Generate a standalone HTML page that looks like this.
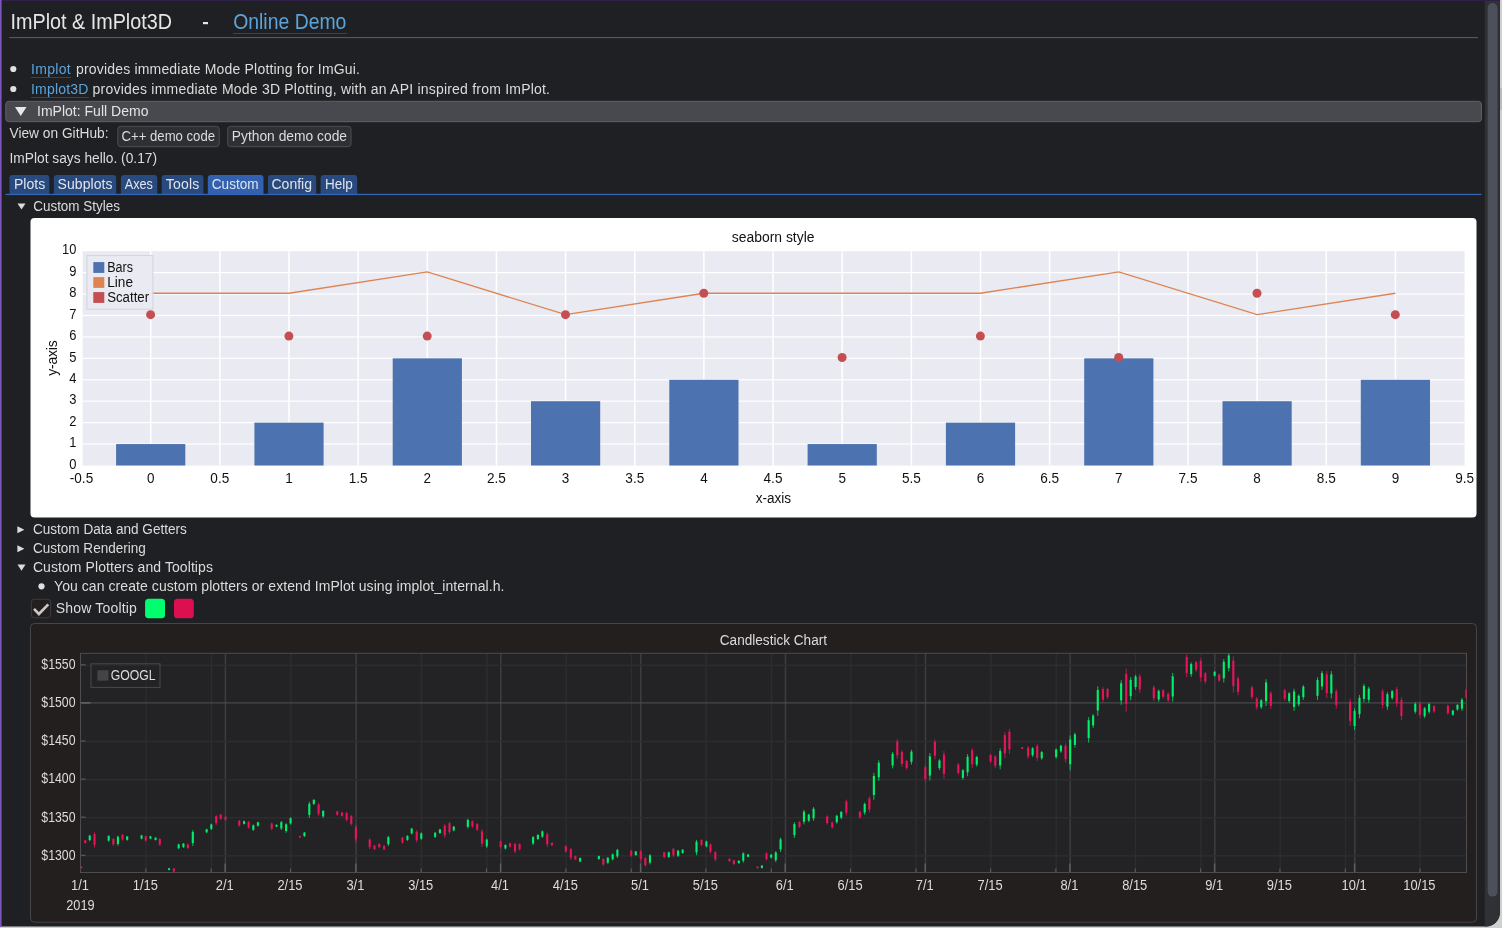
<!DOCTYPE html>
<html><head><meta charset="utf-8"><style>
html,body{margin:0;padding:0;background:#1f2023;overflow:hidden;}
svg{display:block;will-change:transform;}
text{font-family:"Liberation Sans", sans-serif;white-space:pre;}
</style></head><body>
<svg width="1502" height="928" viewBox="0 0 1502 928">
<rect x="0" y="0" width="1502" height="928" fill="#d0d0d1"/>
<path d="M0 0 H1500 V912.5 A14 14 0 0 1 1486 926.5 H0 Z" fill="#1f2023"/>
<rect x="0" y="0" width="1500" height="1" fill="#2f2048"/>
<rect x="0" y="0" width="1.6" height="927" fill="#7c55bd"/>
<rect x="1500" y="88" width="2" height="22" fill="#b9bbbf"/>
<text x="10.6" y="28.7" font-size="21.5" fill="#e6e6e6" textLength="161.4" lengthAdjust="spacingAndGlyphs">ImPlot &amp; ImPlot3D</text>
<rect x="203" y="22" width="5" height="2.2" fill="#e6e6e6"/>
<text x="233.2" y="28.7" font-size="21.5" fill="#5ba3d9" textLength="113.2" lengthAdjust="spacingAndGlyphs">Online Demo</text>
<rect x="233" y="33" width="114" height="1" fill="#3b4250"/>
<rect x="9.3" y="37.1" width="1468.6" height="1" fill="#606060"/>
<circle cx="13.3" cy="69" r="3.1" fill="#e0e0e0"/>
<circle cx="13.3" cy="89" r="3.1" fill="#e0e0e0"/>
<text x="31.0" y="73.6" font-size="14" fill="#5ba3d9" textLength="39.6" lengthAdjust="spacing">Implot</text>
<rect x="31" y="77" width="40" height="1" fill="#3b4250"/>
<text x="75.9" y="73.6" font-size="14" fill="#dcdcdc" textLength="284.1" lengthAdjust="spacing">provides immediate Mode Plotting for ImGui.</text>
<text x="31.0" y="93.6" font-size="14" fill="#5ba3d9" textLength="57.4" lengthAdjust="spacing">Implot3D</text>
<rect x="31" y="97" width="58" height="1" fill="#3b4250"/>
<text x="92.6" y="93.6" font-size="14" fill="#dcdcdc" textLength="457.4" lengthAdjust="spacing">provides immediate Mode 3D Plotting, with an API inspired from ImPlot.</text>
<rect x="5.8" y="101.3" width="1475.6" height="20.4" rx="3" fill="#48494e" stroke="#606165" stroke-width="1"/>
<path d="M15 107 L26.5 107 L20.75 116 Z" fill="#e8e8e8"/>
<text x="37.0" y="116.2" font-size="14" fill="#e4e4e4" textLength="111.5" lengthAdjust="spacing">ImPlot: Full Demo</text>
<text x="9.5" y="138.2" font-size="14" fill="#dcdcdc" textLength="99.0" lengthAdjust="spacingAndGlyphs">View on GitHub:</text>
<rect x="117.8" y="126.3" width="101.4" height="20.4" rx="3" fill="#2f3034" stroke="#4d4e53" stroke-width="1"/>
<text x="121.6" y="140.5" font-size="14" fill="#dcdcdc" textLength="93.4" lengthAdjust="spacingAndGlyphs">C++ demo code</text>
<rect x="227.7" y="126.3" width="123.3" height="20.4" rx="3" fill="#2f3034" stroke="#4d4e53" stroke-width="1"/>
<text x="231.8" y="140.5" font-size="14" fill="#dcdcdc" textLength="115.2" lengthAdjust="spacingAndGlyphs">Python demo code</text>
<text x="9.5" y="163.2" font-size="14" fill="#dcdcdc" textLength="147.5" lengthAdjust="spacingAndGlyphs">ImPlot says hello. (0.17)</text>
<path d="M9.5 194 L9.5 178 Q9.5 175 12.5 175 L46.3 175 Q49.3 175 49.3 178 L49.3 194 Z" fill="#294a7e"/>
<path d="M53.8 194 L53.8 178 Q53.8 175 56.8 175 L113.2 175 Q116.2 175 116.2 178 L116.2 194 Z" fill="#294a7e"/>
<path d="M120.9 194 L120.9 178 Q120.9 175 123.9 175 L154.3 175 Q157.3 175 157.3 178 L157.3 194 Z" fill="#294a7e"/>
<path d="M161.7 194 L161.7 178 Q161.7 175 164.7 175 L200.4 175 Q203.4 175 203.4 178 L203.4 194 Z" fill="#294a7e"/>
<path d="M207.8 194 L207.8 178 Q207.8 175 210.8 175 L260.5 175 Q263.5 175 263.5 178 L263.5 194 Z" fill="#3261b0"/>
<path d="M267.9 194 L267.9 178 Q267.9 175 270.9 175 L313.2 175 Q316.2 175 316.2 178 L316.2 194 Z" fill="#294a7e"/>
<path d="M320.6 194 L320.6 178 Q320.6 175 323.6 175 L354.2 175 Q357.2 175 357.2 178 L357.2 194 Z" fill="#294a7e"/>
<rect x="5.5" y="193.8" width="1476" height="1.3" fill="#3565b5"/>
<text x="13.9" y="188.8" font-size="14" fill="#e0e4ec" textLength="31.4" lengthAdjust="spacing">Plots</text>
<text x="57.6" y="188.8" font-size="14" fill="#e0e4ec" textLength="54.8" lengthAdjust="spacing">Subplots</text>
<text x="124.7" y="188.8" font-size="14" fill="#e0e4ec" textLength="28.2" lengthAdjust="spacingAndGlyphs">Axes</text>
<text x="165.8" y="188.8" font-size="14" fill="#e0e4ec" textLength="33.5" lengthAdjust="spacing">Tools</text>
<text x="211.8" y="188.8" font-size="14" fill="#e0e4ec" textLength="46.8" lengthAdjust="spacingAndGlyphs">Custom</text>
<text x="271.5" y="188.8" font-size="14" fill="#e0e4ec" textLength="40.5" lengthAdjust="spacing">Config</text>
<text x="325.0" y="188.8" font-size="14" fill="#e0e4ec" textLength="27.8" lengthAdjust="spacingAndGlyphs">Help</text>
<path d="M17.5 203.4 L25.5 203.4 L21.5 209.6 Z" fill="#dcdcdc"/>
<text x="33.2" y="210.6" font-size="14" fill="#dcdcdc" textLength="86.8" lengthAdjust="spacingAndGlyphs">Custom Styles</text>
<rect x="30.5" y="218" width="1446" height="299.5" rx="4" fill="#ffffff"/>
<rect x="82.6" y="251.2" width="1382.0" height="214.3" fill="#eaeaf2"/>
<rect x="149.95" y="251.2" width="1.5" height="214.3" fill="#ffffff"/>
<rect x="219.10" y="251.2" width="1.5" height="214.3" fill="#ffffff"/>
<rect x="288.25" y="251.2" width="1.5" height="214.3" fill="#ffffff"/>
<rect x="357.40" y="251.2" width="1.5" height="214.3" fill="#ffffff"/>
<rect x="426.55" y="251.2" width="1.5" height="214.3" fill="#ffffff"/>
<rect x="495.70" y="251.2" width="1.5" height="214.3" fill="#ffffff"/>
<rect x="564.85" y="251.2" width="1.5" height="214.3" fill="#ffffff"/>
<rect x="634.00" y="251.2" width="1.5" height="214.3" fill="#ffffff"/>
<rect x="703.15" y="251.2" width="1.5" height="214.3" fill="#ffffff"/>
<rect x="772.30" y="251.2" width="1.5" height="214.3" fill="#ffffff"/>
<rect x="841.45" y="251.2" width="1.5" height="214.3" fill="#ffffff"/>
<rect x="910.60" y="251.2" width="1.5" height="214.3" fill="#ffffff"/>
<rect x="979.75" y="251.2" width="1.5" height="214.3" fill="#ffffff"/>
<rect x="1048.90" y="251.2" width="1.5" height="214.3" fill="#ffffff"/>
<rect x="1118.05" y="251.2" width="1.5" height="214.3" fill="#ffffff"/>
<rect x="1187.20" y="251.2" width="1.5" height="214.3" fill="#ffffff"/>
<rect x="1256.35" y="251.2" width="1.5" height="214.3" fill="#ffffff"/>
<rect x="1325.50" y="251.2" width="1.5" height="214.3" fill="#ffffff"/>
<rect x="1394.65" y="251.2" width="1.5" height="214.3" fill="#ffffff"/>
<rect x="82.6" y="443.47" width="1382.0" height="1.2" fill="#ffffff"/>
<rect x="82.6" y="422.04" width="1382.0" height="1.2" fill="#ffffff"/>
<rect x="82.6" y="400.61" width="1382.0" height="1.2" fill="#ffffff"/>
<rect x="82.6" y="379.18" width="1382.0" height="1.2" fill="#ffffff"/>
<rect x="82.6" y="357.75" width="1382.0" height="1.2" fill="#ffffff"/>
<rect x="82.6" y="336.32" width="1382.0" height="1.2" fill="#ffffff"/>
<rect x="82.6" y="314.89" width="1382.0" height="1.2" fill="#ffffff"/>
<rect x="82.6" y="293.46" width="1382.0" height="1.2" fill="#ffffff"/>
<rect x="82.6" y="272.03" width="1382.0" height="1.2" fill="#ffffff"/>
<rect x="116.10" y="444.07" width="69.2" height="21.43" fill="#4c72b0"/>
<rect x="254.40" y="422.64" width="69.2" height="42.86" fill="#4c72b0"/>
<rect x="392.70" y="358.35" width="69.2" height="107.15" fill="#4c72b0"/>
<rect x="531.00" y="401.21" width="69.2" height="64.29" fill="#4c72b0"/>
<rect x="669.30" y="379.78" width="69.2" height="85.72" fill="#4c72b0"/>
<rect x="807.60" y="444.07" width="69.2" height="21.43" fill="#4c72b0"/>
<rect x="945.90" y="422.64" width="69.2" height="42.86" fill="#4c72b0"/>
<rect x="1084.20" y="358.35" width="69.2" height="107.15" fill="#4c72b0"/>
<rect x="1222.50" y="401.21" width="69.2" height="64.29" fill="#4c72b0"/>
<rect x="1360.80" y="379.78" width="69.2" height="85.72" fill="#4c72b0"/>
<polyline points="150.70,293.26 289.00,293.26 427.30,271.83 565.60,314.69 703.90,293.26 842.20,293.26 980.50,293.26 1118.80,271.83 1257.10,314.69 1395.40,293.26" fill="none" stroke="#dd8452" stroke-width="1.3"/>
<circle cx="150.60" cy="314.69" r="4.5" fill="#c44e52"/>
<circle cx="288.90" cy="336.12" r="4.5" fill="#c44e52"/>
<circle cx="427.20" cy="336.12" r="4.5" fill="#c44e52"/>
<circle cx="565.50" cy="314.69" r="4.5" fill="#c44e52"/>
<circle cx="703.80" cy="293.26" r="4.5" fill="#c44e52"/>
<circle cx="842.10" cy="357.55" r="4.5" fill="#c44e52"/>
<circle cx="980.40" cy="336.12" r="4.5" fill="#c44e52"/>
<circle cx="1118.70" cy="357.55" r="4.5" fill="#c44e52"/>
<circle cx="1257.00" cy="293.26" r="4.5" fill="#c44e52"/>
<circle cx="1395.30" cy="314.69" r="4.5" fill="#c44e52"/>
<rect x="86.9" y="255.6" width="66" height="53.6" fill="#eaeaf2" stroke="#d0d3de" stroke-width="1"/>
<rect x="93.3" y="262.1" width="11" height="10.8" fill="#4c72b0"/>
<text x="107.2" y="271.9" font-size="14" fill="#111111" textLength="25.8" lengthAdjust="spacingAndGlyphs">Bars</text>
<rect x="93.3" y="277.1" width="11" height="10.8" fill="#dd8452"/>
<text x="107.2" y="286.9" font-size="14" fill="#111111" textLength="25.8" lengthAdjust="spacingAndGlyphs">Line</text>
<rect x="93.3" y="292.1" width="11" height="10.8" fill="#c44e52"/>
<text x="107.2" y="301.9" font-size="14" fill="#111111" textLength="41.9" lengthAdjust="spacingAndGlyphs">Scatter</text>
<text x="76.4" y="468.7" font-size="14" fill="#111111" textLength="7.2" lengthAdjust="spacingAndGlyphs" text-anchor="end">0</text>
<text x="76.4" y="447.3" font-size="14" fill="#111111" textLength="7.2" lengthAdjust="spacingAndGlyphs" text-anchor="end">1</text>
<text x="76.4" y="425.8" font-size="14" fill="#111111" textLength="7.2" lengthAdjust="spacingAndGlyphs" text-anchor="end">2</text>
<text x="76.4" y="404.4" font-size="14" fill="#111111" textLength="7.2" lengthAdjust="spacingAndGlyphs" text-anchor="end">3</text>
<text x="76.4" y="383.0" font-size="14" fill="#111111" textLength="7.2" lengthAdjust="spacingAndGlyphs" text-anchor="end">4</text>
<text x="76.4" y="361.6" font-size="14" fill="#111111" textLength="7.2" lengthAdjust="spacingAndGlyphs" text-anchor="end">5</text>
<text x="76.4" y="340.1" font-size="14" fill="#111111" textLength="7.2" lengthAdjust="spacingAndGlyphs" text-anchor="end">6</text>
<text x="76.4" y="318.7" font-size="14" fill="#111111" textLength="7.2" lengthAdjust="spacingAndGlyphs" text-anchor="end">7</text>
<text x="76.4" y="297.3" font-size="14" fill="#111111" textLength="7.2" lengthAdjust="spacingAndGlyphs" text-anchor="end">8</text>
<text x="76.4" y="275.8" font-size="14" fill="#111111" textLength="7.2" lengthAdjust="spacingAndGlyphs" text-anchor="end">9</text>
<text x="76.4" y="254.4" font-size="14" fill="#111111" textLength="14.3" lengthAdjust="spacingAndGlyphs" text-anchor="end">10</text>
<text x="81.5" y="483.0" font-size="14" fill="#111111" textLength="23.4" lengthAdjust="spacingAndGlyphs" text-anchor="middle">-0.5</text>
<text x="150.7" y="483.0" font-size="14" fill="#111111" textLength="7.5" lengthAdjust="spacingAndGlyphs" text-anchor="middle">0</text>
<text x="219.8" y="483.0" font-size="14" fill="#111111" textLength="18.9" lengthAdjust="spacingAndGlyphs" text-anchor="middle">0.5</text>
<text x="289.0" y="483.0" font-size="14" fill="#111111" textLength="7.5" lengthAdjust="spacingAndGlyphs" text-anchor="middle">1</text>
<text x="358.1" y="483.0" font-size="14" fill="#111111" textLength="18.9" lengthAdjust="spacingAndGlyphs" text-anchor="middle">1.5</text>
<text x="427.3" y="483.0" font-size="14" fill="#111111" textLength="7.5" lengthAdjust="spacingAndGlyphs" text-anchor="middle">2</text>
<text x="496.4" y="483.0" font-size="14" fill="#111111" textLength="18.9" lengthAdjust="spacingAndGlyphs" text-anchor="middle">2.5</text>
<text x="565.6" y="483.0" font-size="14" fill="#111111" textLength="7.5" lengthAdjust="spacingAndGlyphs" text-anchor="middle">3</text>
<text x="634.8" y="483.0" font-size="14" fill="#111111" textLength="18.9" lengthAdjust="spacingAndGlyphs" text-anchor="middle">3.5</text>
<text x="703.9" y="483.0" font-size="14" fill="#111111" textLength="7.5" lengthAdjust="spacingAndGlyphs" text-anchor="middle">4</text>
<text x="773.0" y="483.0" font-size="14" fill="#111111" textLength="18.9" lengthAdjust="spacingAndGlyphs" text-anchor="middle">4.5</text>
<text x="842.2" y="483.0" font-size="14" fill="#111111" textLength="7.5" lengthAdjust="spacingAndGlyphs" text-anchor="middle">5</text>
<text x="911.4" y="483.0" font-size="14" fill="#111111" textLength="18.9" lengthAdjust="spacingAndGlyphs" text-anchor="middle">5.5</text>
<text x="980.5" y="483.0" font-size="14" fill="#111111" textLength="7.5" lengthAdjust="spacingAndGlyphs" text-anchor="middle">6</text>
<text x="1049.7" y="483.0" font-size="14" fill="#111111" textLength="18.9" lengthAdjust="spacingAndGlyphs" text-anchor="middle">6.5</text>
<text x="1118.8" y="483.0" font-size="14" fill="#111111" textLength="7.5" lengthAdjust="spacingAndGlyphs" text-anchor="middle">7</text>
<text x="1188.0" y="483.0" font-size="14" fill="#111111" textLength="18.9" lengthAdjust="spacingAndGlyphs" text-anchor="middle">7.5</text>
<text x="1257.1" y="483.0" font-size="14" fill="#111111" textLength="7.5" lengthAdjust="spacingAndGlyphs" text-anchor="middle">8</text>
<text x="1326.3" y="483.0" font-size="14" fill="#111111" textLength="18.9" lengthAdjust="spacingAndGlyphs" text-anchor="middle">8.5</text>
<text x="1395.4" y="483.0" font-size="14" fill="#111111" textLength="7.5" lengthAdjust="spacingAndGlyphs" text-anchor="middle">9</text>
<text x="1464.6" y="483.0" font-size="14" fill="#111111" textLength="18.9" lengthAdjust="spacingAndGlyphs" text-anchor="middle">9.5</text>
<text x="773.4" y="503.0" font-size="14" fill="#111111" textLength="35.5" lengthAdjust="spacingAndGlyphs" text-anchor="middle">x-axis</text>
<text x="731.8" y="241.8" font-size="14" fill="#111111" textLength="82.7" lengthAdjust="spacingAndGlyphs">seaborn style</text>
<text x="0" y="0" font-size="14" fill="#111111" text-anchor="middle" transform="translate(56.8 358) rotate(-90)" textLength="35.5" lengthAdjust="spacing">y-axis</text>
<path d="M17.4 526.2 L24.4 529.7 L17.4 533.2 Z" fill="#dcdcdc"/>
<text x="32.9" y="533.7" font-size="14" fill="#dcdcdc" textLength="154.0" lengthAdjust="spacingAndGlyphs">Custom Data and Getters</text>
<path d="M17.4 545.2 L24.4 548.7 L17.4 552.2 Z" fill="#dcdcdc"/>
<text x="32.9" y="552.7" font-size="14" fill="#dcdcdc" textLength="113.0" lengthAdjust="spacingAndGlyphs">Custom Rendering</text>
<path d="M17.5 564.6 L25.5 564.6 L21.5 570.8 Z" fill="#dcdcdc"/>
<text x="32.9" y="571.8" font-size="14" fill="#dcdcdc" textLength="180.0" lengthAdjust="spacing">Custom Plotters and Tooltips</text>
<circle cx="41.5" cy="586.3" r="3.1" fill="#e0e0e0"/>
<text x="54.0" y="591.0" font-size="14" fill="#dcdcdc" textLength="450.4" lengthAdjust="spacing">You can create custom plotters or extend ImPlot using implot_internal.h.</text>
<rect x="31.3" y="599.3" width="19.4" height="18.5" rx="3" fill="#231f1f" stroke="#403b3b" stroke-width="1"/>
<path d="M34 608.8 L38.9 614 L48.3 604.3" fill="none" stroke="#c8c8c8" stroke-width="2.6"/>
<text x="55.7" y="612.8" font-size="14" fill="#dcdcdc" textLength="81.2" lengthAdjust="spacing">Show Tooltip</text>
<rect x="145.1" y="598.8" width="19.9" height="19.5" rx="3.5" fill="#00ff6e"/>
<rect x="174" y="598.8" width="19.8" height="19.5" rx="3.5" fill="#dc0f50"/>
<rect x="30.5" y="623.5" width="1446" height="298.7" rx="4" fill="#231f1f" stroke="#4a4545" stroke-width="1"/>
<text x="719.8" y="644.5" font-size="14" fill="#dcdcdc" textLength="107.2" lengthAdjust="spacingAndGlyphs">Candlestick Chart</text>
<rect x="80.5" y="653.3" width="1386.0" height="219.20000000000005" fill="#232325"/>
<rect x="145.34" y="653.3" width="1.5" height="219.20000000000005" fill="#2c2d2f"/>
<rect x="145.24" y="868.5" width="1.2" height="4" fill="#5a5a5a"/>
<rect x="210.68" y="653.3" width="1.5" height="219.20000000000005" fill="#2c2d2f"/>
<rect x="210.58" y="868.5" width="1.2" height="4" fill="#5a5a5a"/>
<rect x="290.01" y="653.3" width="1.5" height="219.20000000000005" fill="#2c2d2f"/>
<rect x="289.91" y="868.5" width="1.2" height="4" fill="#5a5a5a"/>
<rect x="420.69" y="653.3" width="1.5" height="219.20000000000005" fill="#2c2d2f"/>
<rect x="420.59" y="868.5" width="1.2" height="4" fill="#5a5a5a"/>
<rect x="486.03" y="653.3" width="1.5" height="219.20000000000005" fill="#2c2d2f"/>
<rect x="485.93" y="868.5" width="1.2" height="4" fill="#5a5a5a"/>
<rect x="565.37" y="653.3" width="1.5" height="219.20000000000005" fill="#2c2d2f"/>
<rect x="565.27" y="868.5" width="1.2" height="4" fill="#5a5a5a"/>
<rect x="630.71" y="653.3" width="1.5" height="219.20000000000005" fill="#2c2d2f"/>
<rect x="630.61" y="868.5" width="1.2" height="4" fill="#5a5a5a"/>
<rect x="705.38" y="653.3" width="1.5" height="219.20000000000005" fill="#2c2d2f"/>
<rect x="705.28" y="868.5" width="1.2" height="4" fill="#5a5a5a"/>
<rect x="770.72" y="653.3" width="1.5" height="219.20000000000005" fill="#2c2d2f"/>
<rect x="770.62" y="868.5" width="1.2" height="4" fill="#5a5a5a"/>
<rect x="850.05" y="653.3" width="1.5" height="219.20000000000005" fill="#2c2d2f"/>
<rect x="849.95" y="868.5" width="1.2" height="4" fill="#5a5a5a"/>
<rect x="915.39" y="653.3" width="1.5" height="219.20000000000005" fill="#2c2d2f"/>
<rect x="915.29" y="868.5" width="1.2" height="4" fill="#5a5a5a"/>
<rect x="990.06" y="653.3" width="1.5" height="219.20000000000005" fill="#2c2d2f"/>
<rect x="989.96" y="868.5" width="1.2" height="4" fill="#5a5a5a"/>
<rect x="1055.40" y="653.3" width="1.5" height="219.20000000000005" fill="#2c2d2f"/>
<rect x="1055.30" y="868.5" width="1.2" height="4" fill="#5a5a5a"/>
<rect x="1134.74" y="653.3" width="1.5" height="219.20000000000005" fill="#2c2d2f"/>
<rect x="1134.64" y="868.5" width="1.2" height="4" fill="#5a5a5a"/>
<rect x="1200.08" y="653.3" width="1.5" height="219.20000000000005" fill="#2c2d2f"/>
<rect x="1199.98" y="868.5" width="1.2" height="4" fill="#5a5a5a"/>
<rect x="1279.42" y="653.3" width="1.5" height="219.20000000000005" fill="#2c2d2f"/>
<rect x="1279.32" y="868.5" width="1.2" height="4" fill="#5a5a5a"/>
<rect x="1344.76" y="653.3" width="1.5" height="219.20000000000005" fill="#2c2d2f"/>
<rect x="1344.66" y="868.5" width="1.2" height="4" fill="#5a5a5a"/>
<rect x="1419.43" y="653.3" width="1.5" height="219.20000000000005" fill="#2c2d2f"/>
<rect x="1419.33" y="868.5" width="1.2" height="4" fill="#5a5a5a"/>
<rect x="224.68" y="653.3" width="1.5" height="219.20000000000005" fill="#3d3e41"/>
<rect x="224.48" y="863.5" width="1.4" height="9" fill="#606060"/>
<rect x="355.35" y="653.3" width="1.5" height="219.20000000000005" fill="#3d3e41"/>
<rect x="355.15" y="863.5" width="1.4" height="9" fill="#606060"/>
<rect x="500.03" y="653.3" width="1.5" height="219.20000000000005" fill="#3d3e41"/>
<rect x="499.83" y="863.5" width="1.4" height="9" fill="#606060"/>
<rect x="640.04" y="653.3" width="1.5" height="219.20000000000005" fill="#3d3e41"/>
<rect x="639.84" y="863.5" width="1.4" height="9" fill="#606060"/>
<rect x="784.72" y="653.3" width="1.5" height="219.20000000000005" fill="#3d3e41"/>
<rect x="784.52" y="863.5" width="1.4" height="9" fill="#606060"/>
<rect x="924.73" y="653.3" width="1.5" height="219.20000000000005" fill="#3d3e41"/>
<rect x="924.53" y="863.5" width="1.4" height="9" fill="#606060"/>
<rect x="1069.40" y="653.3" width="1.5" height="219.20000000000005" fill="#3d3e41"/>
<rect x="1069.20" y="863.5" width="1.4" height="9" fill="#606060"/>
<rect x="1214.08" y="653.3" width="1.5" height="219.20000000000005" fill="#3d3e41"/>
<rect x="1213.88" y="863.5" width="1.4" height="9" fill="#606060"/>
<rect x="1354.09" y="653.3" width="1.5" height="219.20000000000005" fill="#3d3e41"/>
<rect x="1353.89" y="863.5" width="1.4" height="9" fill="#606060"/>
<rect x="80.5" y="855.10" width="1386.0" height="1.5" fill="#2c2d2f"/>
<rect x="80.5" y="854.70" width="5" height="1.2" fill="#5a5a5a"/>
<rect x="80.5" y="817.00" width="1386.0" height="1.5" fill="#2c2d2f"/>
<rect x="80.5" y="816.60" width="5" height="1.2" fill="#5a5a5a"/>
<rect x="80.5" y="778.90" width="1386.0" height="1.5" fill="#2c2d2f"/>
<rect x="80.5" y="778.50" width="5" height="1.2" fill="#5a5a5a"/>
<rect x="80.5" y="740.80" width="1386.0" height="1.5" fill="#2c2d2f"/>
<rect x="80.5" y="740.40" width="5" height="1.2" fill="#5a5a5a"/>
<rect x="80.5" y="664.60" width="1386.0" height="1.5" fill="#2c2d2f"/>
<rect x="80.5" y="664.20" width="5" height="1.2" fill="#5a5a5a"/>
<rect x="80.5" y="702.30" width="1386.0" height="1.2" fill="#4a4b4f"/>
<rect x="80.5" y="702.20" width="10" height="1.4" fill="#666"/>
<rect x="80.5" y="653.3" width="1386.0" height="219.20000000000005" fill="none" stroke="#4d4d50" stroke-width="1"/>
<text x="75.5" y="859.6" font-size="14" fill="#dcdcdc" textLength="34.2" lengthAdjust="spacingAndGlyphs" text-anchor="end">$1300</text>
<text x="75.5" y="821.5" font-size="14" fill="#dcdcdc" textLength="34.2" lengthAdjust="spacingAndGlyphs" text-anchor="end">$1350</text>
<text x="75.5" y="783.4" font-size="14" fill="#dcdcdc" textLength="34.2" lengthAdjust="spacingAndGlyphs" text-anchor="end">$1400</text>
<text x="75.5" y="745.3" font-size="14" fill="#dcdcdc" textLength="34.2" lengthAdjust="spacingAndGlyphs" text-anchor="end">$1450</text>
<text x="75.5" y="707.2" font-size="14" fill="#dcdcdc" textLength="34.2" lengthAdjust="spacingAndGlyphs" text-anchor="end">$1500</text>
<text x="75.5" y="669.1" font-size="14" fill="#dcdcdc" textLength="34.2" lengthAdjust="spacingAndGlyphs" text-anchor="end">$1550</text>
<text x="80.0" y="889.7" font-size="14" fill="#dcdcdc" textLength="17.9" lengthAdjust="spacingAndGlyphs" text-anchor="middle">1/1</text>
<text x="145.3" y="889.7" font-size="14" fill="#dcdcdc" textLength="25.1" lengthAdjust="spacingAndGlyphs" text-anchor="middle">1/15</text>
<text x="224.7" y="889.7" font-size="14" fill="#dcdcdc" textLength="17.9" lengthAdjust="spacingAndGlyphs" text-anchor="middle">2/1</text>
<text x="290.0" y="889.7" font-size="14" fill="#dcdcdc" textLength="25.1" lengthAdjust="spacingAndGlyphs" text-anchor="middle">2/15</text>
<text x="355.4" y="889.7" font-size="14" fill="#dcdcdc" textLength="17.9" lengthAdjust="spacingAndGlyphs" text-anchor="middle">3/1</text>
<text x="420.7" y="889.7" font-size="14" fill="#dcdcdc" textLength="25.1" lengthAdjust="spacingAndGlyphs" text-anchor="middle">3/15</text>
<text x="500.0" y="889.7" font-size="14" fill="#dcdcdc" textLength="17.9" lengthAdjust="spacingAndGlyphs" text-anchor="middle">4/1</text>
<text x="565.4" y="889.7" font-size="14" fill="#dcdcdc" textLength="25.1" lengthAdjust="spacingAndGlyphs" text-anchor="middle">4/15</text>
<text x="640.0" y="889.7" font-size="14" fill="#dcdcdc" textLength="17.9" lengthAdjust="spacingAndGlyphs" text-anchor="middle">5/1</text>
<text x="705.4" y="889.7" font-size="14" fill="#dcdcdc" textLength="25.1" lengthAdjust="spacingAndGlyphs" text-anchor="middle">5/15</text>
<text x="784.7" y="889.7" font-size="14" fill="#dcdcdc" textLength="17.9" lengthAdjust="spacingAndGlyphs" text-anchor="middle">6/1</text>
<text x="850.1" y="889.7" font-size="14" fill="#dcdcdc" textLength="25.1" lengthAdjust="spacingAndGlyphs" text-anchor="middle">6/15</text>
<text x="924.7" y="889.7" font-size="14" fill="#dcdcdc" textLength="17.9" lengthAdjust="spacingAndGlyphs" text-anchor="middle">7/1</text>
<text x="990.1" y="889.7" font-size="14" fill="#dcdcdc" textLength="25.1" lengthAdjust="spacingAndGlyphs" text-anchor="middle">7/15</text>
<text x="1069.4" y="889.7" font-size="14" fill="#dcdcdc" textLength="17.9" lengthAdjust="spacingAndGlyphs" text-anchor="middle">8/1</text>
<text x="1134.7" y="889.7" font-size="14" fill="#dcdcdc" textLength="25.1" lengthAdjust="spacingAndGlyphs" text-anchor="middle">8/15</text>
<text x="1214.1" y="889.7" font-size="14" fill="#dcdcdc" textLength="17.9" lengthAdjust="spacingAndGlyphs" text-anchor="middle">9/1</text>
<text x="1279.4" y="889.7" font-size="14" fill="#dcdcdc" textLength="25.1" lengthAdjust="spacingAndGlyphs" text-anchor="middle">9/15</text>
<text x="1354.1" y="889.7" font-size="14" fill="#dcdcdc" textLength="25.1" lengthAdjust="spacingAndGlyphs" text-anchor="middle">10/1</text>
<text x="1419.4" y="889.7" font-size="14" fill="#dcdcdc" textLength="32.2" lengthAdjust="spacingAndGlyphs" text-anchor="middle">10/15</text>
<text x="80.4" y="909.8" font-size="14" fill="#dcdcdc" textLength="28.4" lengthAdjust="spacingAndGlyphs" text-anchor="middle">2019</text>
<clipPath id="cp"><rect x="80.5" y="653.3" width="1386.0" height="219.20000000000005"/></clipPath><g clip-path="url(#cp)">
<rect x="80.69" y="866.26" width="1" height="2.13" fill="#e8145a" opacity="0.75"/>
<rect x="80.14" y="866.52" width="2.1" height="1.50" fill="#e8145a"/>
<rect x="84.74" y="839.85" width="1" height="3.83" fill="#e8145a" opacity="0.75"/>
<rect x="84.19" y="840.31" width="2.1" height="2.68" fill="#e8145a"/>
<rect x="89.21" y="834.85" width="1" height="6.39" fill="#00f06c" opacity="0.75"/>
<rect x="88.66" y="835.61" width="2.1" height="4.47" fill="#00f06c"/>
<rect x="94.01" y="832.18" width="1" height="15.44" fill="#e8145a" opacity="0.75"/>
<rect x="93.46" y="834.04" width="2.1" height="10.81" fill="#e8145a"/>
<rect x="108.17" y="835.17" width="1" height="6.60" fill="#00f06c" opacity="0.75"/>
<rect x="107.62" y="835.96" width="2.1" height="4.62" fill="#00f06c"/>
<rect x="112.86" y="838.04" width="1" height="7.77" fill="#e8145a" opacity="0.75"/>
<rect x="112.31" y="838.97" width="2.1" height="5.44" fill="#e8145a"/>
<rect x="117.44" y="835.59" width="1" height="10.22" fill="#00f06c" opacity="0.75"/>
<rect x="116.89" y="836.82" width="2.1" height="7.16" fill="#00f06c"/>
<rect x="122.02" y="834.10" width="1" height="6.60" fill="#e8145a" opacity="0.75"/>
<rect x="121.47" y="834.89" width="2.1" height="4.62" fill="#e8145a"/>
<rect x="126.70" y="835.91" width="1" height="4.79" fill="#00f06c" opacity="0.75"/>
<rect x="126.15" y="836.49" width="2.1" height="3.35" fill="#00f06c"/>
<rect x="141.08" y="834.85" width="1" height="4.58" fill="#00f06c" opacity="0.75"/>
<rect x="140.53" y="835.40" width="2.1" height="3.21" fill="#00f06c"/>
<rect x="145.23" y="835.59" width="1" height="5.96" fill="#e8145a" opacity="0.75"/>
<rect x="144.68" y="836.31" width="2.1" height="4.17" fill="#e8145a"/>
<rect x="149.92" y="835.91" width="1" height="3.19" fill="#00f06c" opacity="0.75"/>
<rect x="149.37" y="836.29" width="2.1" height="2.24" fill="#00f06c"/>
<rect x="155.03" y="837.29" width="1" height="3.19" fill="#00f06c" opacity="0.75"/>
<rect x="154.48" y="837.68" width="2.1" height="2.24" fill="#00f06c"/>
<rect x="159.29" y="838.04" width="1" height="7.99" fill="#e8145a" opacity="0.75"/>
<rect x="158.74" y="839.00" width="2.1" height="5.59" fill="#e8145a"/>
<rect x="168.55" y="867.97" width="1" height="2.34" fill="#00f06c" opacity="0.75"/>
<rect x="168.00" y="868.25" width="2.1" height="1.64" fill="#00f06c"/>
<rect x="173.35" y="867.97" width="1" height="4.47" fill="#e8145a" opacity="0.75"/>
<rect x="172.80" y="868.50" width="2.1" height="3.13" fill="#e8145a"/>
<rect x="178.14" y="843.68" width="1" height="5.54" fill="#00f06c" opacity="0.75"/>
<rect x="177.59" y="844.35" width="2.1" height="3.88" fill="#00f06c"/>
<rect x="182.93" y="843.05" width="1" height="4.90" fill="#00f06c" opacity="0.75"/>
<rect x="182.38" y="843.63" width="2.1" height="3.43" fill="#00f06c"/>
<rect x="187.40" y="843.68" width="1" height="5.32" fill="#e8145a" opacity="0.75"/>
<rect x="186.85" y="844.32" width="2.1" height="3.73" fill="#e8145a"/>
<rect x="192.30" y="830.05" width="1" height="15.97" fill="#00f06c" opacity="0.75"/>
<rect x="191.75" y="831.97" width="2.1" height="11.18" fill="#00f06c"/>
<rect x="206.15" y="828.78" width="1" height="4.26" fill="#00f06c" opacity="0.75"/>
<rect x="205.60" y="829.29" width="2.1" height="2.98" fill="#00f06c"/>
<rect x="210.83" y="823.66" width="1" height="6.39" fill="#00f06c" opacity="0.75"/>
<rect x="210.28" y="824.43" width="2.1" height="4.47" fill="#00f06c"/>
<rect x="215.73" y="814.93" width="1" height="10.01" fill="#e8145a" opacity="0.75"/>
<rect x="215.18" y="816.13" width="2.1" height="7.01" fill="#e8145a"/>
<rect x="220.21" y="813.87" width="1" height="6.07" fill="#e8145a" opacity="0.75"/>
<rect x="219.66" y="814.59" width="2.1" height="4.25" fill="#e8145a"/>
<rect x="225.00" y="816.21" width="1" height="4.47" fill="#e8145a" opacity="0.75"/>
<rect x="224.45" y="816.75" width="2.1" height="3.13" fill="#e8145a"/>
<rect x="238.76" y="819.94" width="1" height="6.71" fill="#e8145a" opacity="0.75"/>
<rect x="238.21" y="820.74" width="2.1" height="4.70" fill="#e8145a"/>
<rect x="243.55" y="820.68" width="1" height="3.83" fill="#00f06c" opacity="0.75"/>
<rect x="243.00" y="821.14" width="2.1" height="2.68" fill="#00f06c"/>
<rect x="248.13" y="821.00" width="1" height="7.77" fill="#e8145a" opacity="0.75"/>
<rect x="247.58" y="821.93" width="2.1" height="5.44" fill="#e8145a"/>
<rect x="252.82" y="824.52" width="1" height="6.39" fill="#00f06c" opacity="0.75"/>
<rect x="252.27" y="825.28" width="2.1" height="4.47" fill="#00f06c"/>
<rect x="257.40" y="821.75" width="1" height="4.90" fill="#00f06c" opacity="0.75"/>
<rect x="256.85" y="822.33" width="2.1" height="3.43" fill="#00f06c"/>
<rect x="271.24" y="822.60" width="1" height="7.45" fill="#e8145a" opacity="0.75"/>
<rect x="270.69" y="823.49" width="2.1" height="5.22" fill="#e8145a"/>
<rect x="276.03" y="824.52" width="1" height="2.56" fill="#00f06c" opacity="0.75"/>
<rect x="275.48" y="824.82" width="2.1" height="1.79" fill="#00f06c"/>
<rect x="280.83" y="821.00" width="1" height="9.05" fill="#00f06c" opacity="0.75"/>
<rect x="280.28" y="822.09" width="2.1" height="6.34" fill="#00f06c"/>
<rect x="285.62" y="823.13" width="1" height="9.58" fill="#00f06c" opacity="0.75"/>
<rect x="285.07" y="824.28" width="2.1" height="6.71" fill="#00f06c"/>
<rect x="290.09" y="817.27" width="1" height="7.45" fill="#00f06c" opacity="0.75"/>
<rect x="289.54" y="818.17" width="2.1" height="5.22" fill="#00f06c"/>
<rect x="299.46" y="835.91" width="1" height="1.60" fill="#e8145a" opacity="0.75"/>
<rect x="298.91" y="836.10" width="2.1" height="1.50" fill="#e8145a"/>
<rect x="303.94" y="831.97" width="1" height="5.01" fill="#00f06c" opacity="0.75"/>
<rect x="303.39" y="832.57" width="2.1" height="3.50" fill="#00f06c"/>
<rect x="308.83" y="801.83" width="1" height="15.97" fill="#00f06c" opacity="0.75"/>
<rect x="308.28" y="803.75" width="2.1" height="11.18" fill="#00f06c"/>
<rect x="313.31" y="799.17" width="1" height="5.86" fill="#00f06c" opacity="0.75"/>
<rect x="312.76" y="799.87" width="2.1" height="4.10" fill="#00f06c"/>
<rect x="318.10" y="802.90" width="1" height="13.31" fill="#e8145a" opacity="0.75"/>
<rect x="317.55" y="804.49" width="2.1" height="9.32" fill="#e8145a"/>
<rect x="322.68" y="810.03" width="1" height="7.77" fill="#00f06c" opacity="0.75"/>
<rect x="322.13" y="810.96" width="2.1" height="5.44" fill="#00f06c"/>
<rect x="336.74" y="810.88" width="1" height="4.79" fill="#e8145a" opacity="0.75"/>
<rect x="336.19" y="811.46" width="2.1" height="3.35" fill="#e8145a"/>
<rect x="341.53" y="811.95" width="1" height="4.79" fill="#e8145a" opacity="0.75"/>
<rect x="340.98" y="812.52" width="2.1" height="3.35" fill="#e8145a"/>
<rect x="346.11" y="811.95" width="1" height="9.58" fill="#e8145a" opacity="0.75"/>
<rect x="345.56" y="813.10" width="2.1" height="6.71" fill="#e8145a"/>
<rect x="350.79" y="814.93" width="1" height="10.86" fill="#e8145a" opacity="0.75"/>
<rect x="350.24" y="816.23" width="2.1" height="7.60" fill="#e8145a"/>
<rect x="355.37" y="824.73" width="1" height="18.10" fill="#e8145a" opacity="0.75"/>
<rect x="354.82" y="826.90" width="2.1" height="12.67" fill="#e8145a"/>
<rect x="369.22" y="838.36" width="1" height="10.65" fill="#e8145a" opacity="0.75"/>
<rect x="368.67" y="839.64" width="2.1" height="7.45" fill="#e8145a"/>
<rect x="374.01" y="844.96" width="1" height="5.11" fill="#e8145a" opacity="0.75"/>
<rect x="373.46" y="845.58" width="2.1" height="3.58" fill="#e8145a"/>
<rect x="378.80" y="843.37" width="1" height="4.58" fill="#e8145a" opacity="0.75"/>
<rect x="378.25" y="843.91" width="2.1" height="3.21" fill="#e8145a"/>
<rect x="383.59" y="845.18" width="1" height="5.11" fill="#e8145a" opacity="0.75"/>
<rect x="383.04" y="845.79" width="2.1" height="3.58" fill="#e8145a"/>
<rect x="387.85" y="835.91" width="1" height="10.12" fill="#00f06c" opacity="0.75"/>
<rect x="387.30" y="837.12" width="2.1" height="7.08" fill="#00f06c"/>
<rect x="401.94" y="836.86" width="1" height="6.92" fill="#e8145a" opacity="0.75"/>
<rect x="401.39" y="837.69" width="2.1" height="4.85" fill="#e8145a"/>
<rect x="406.94" y="835.26" width="1" height="5.64" fill="#00f06c" opacity="0.75"/>
<rect x="406.39" y="835.94" width="2.1" height="3.95" fill="#00f06c"/>
<rect x="411.20" y="827.81" width="1" height="6.71" fill="#00f06c" opacity="0.75"/>
<rect x="410.65" y="828.61" width="2.1" height="4.70" fill="#00f06c"/>
<rect x="416.21" y="830.26" width="1" height="12.14" fill="#e8145a" opacity="0.75"/>
<rect x="415.66" y="831.71" width="2.1" height="8.50" fill="#e8145a"/>
<rect x="420.79" y="832.39" width="1" height="7.67" fill="#00f06c" opacity="0.75"/>
<rect x="420.24" y="833.31" width="2.1" height="5.37" fill="#00f06c"/>
<rect x="434.63" y="832.07" width="1" height="5.86" fill="#00f06c" opacity="0.75"/>
<rect x="434.08" y="832.77" width="2.1" height="4.10" fill="#00f06c"/>
<rect x="439.42" y="828.87" width="1" height="5.01" fill="#00f06c" opacity="0.75"/>
<rect x="438.87" y="829.47" width="2.1" height="3.50" fill="#00f06c"/>
<rect x="444.22" y="824.08" width="1" height="13.84" fill="#e8145a" opacity="0.75"/>
<rect x="443.67" y="825.74" width="2.1" height="9.69" fill="#e8145a"/>
<rect x="449.01" y="821.74" width="1" height="12.46" fill="#e8145a" opacity="0.75"/>
<rect x="448.46" y="823.23" width="2.1" height="8.72" fill="#e8145a"/>
<rect x="453.27" y="826.00" width="1" height="5.32" fill="#00f06c" opacity="0.75"/>
<rect x="452.72" y="826.63" width="2.1" height="3.73" fill="#00f06c"/>
<rect x="467.33" y="818.75" width="1" height="9.80" fill="#00f06c" opacity="0.75"/>
<rect x="466.78" y="819.93" width="2.1" height="6.86" fill="#00f06c"/>
<rect x="471.90" y="820.35" width="1" height="7.45" fill="#e8145a" opacity="0.75"/>
<rect x="471.35" y="821.25" width="2.1" height="5.22" fill="#e8145a"/>
<rect x="476.70" y="823.01" width="1" height="7.99" fill="#e8145a" opacity="0.75"/>
<rect x="476.15" y="823.97" width="2.1" height="5.59" fill="#e8145a"/>
<rect x="481.49" y="829.19" width="1" height="17.78" fill="#e8145a" opacity="0.75"/>
<rect x="480.94" y="831.32" width="2.1" height="12.45" fill="#e8145a"/>
<rect x="486.28" y="838.46" width="1" height="9.58" fill="#00f06c" opacity="0.75"/>
<rect x="485.73" y="839.61" width="2.1" height="6.71" fill="#00f06c"/>
<rect x="500.13" y="840.59" width="1" height="7.77" fill="#e8145a" opacity="0.75"/>
<rect x="499.58" y="841.52" width="2.1" height="5.44" fill="#e8145a"/>
<rect x="504.92" y="844.31" width="1" height="5.11" fill="#00f06c" opacity="0.75"/>
<rect x="504.37" y="844.93" width="2.1" height="3.58" fill="#00f06c"/>
<rect x="509.50" y="842.72" width="1" height="4.79" fill="#e8145a" opacity="0.75"/>
<rect x="508.95" y="843.29" width="2.1" height="3.35" fill="#e8145a"/>
<rect x="514.50" y="842.72" width="1" height="10.65" fill="#e8145a" opacity="0.75"/>
<rect x="513.95" y="843.99" width="2.1" height="7.45" fill="#e8145a"/>
<rect x="519.08" y="843.25" width="1" height="7.24" fill="#e8145a" opacity="0.75"/>
<rect x="518.53" y="844.12" width="2.1" height="5.07" fill="#e8145a"/>
<rect x="532.61" y="836.01" width="1" height="9.16" fill="#00f06c" opacity="0.75"/>
<rect x="532.06" y="837.11" width="2.1" height="6.41" fill="#00f06c"/>
<rect x="537.40" y="834.20" width="1" height="5.86" fill="#00f06c" opacity="0.75"/>
<rect x="536.85" y="834.90" width="2.1" height="4.10" fill="#00f06c"/>
<rect x="541.87" y="830.47" width="1" height="7.45" fill="#00f06c" opacity="0.75"/>
<rect x="541.32" y="831.36" width="2.1" height="5.22" fill="#00f06c"/>
<rect x="546.77" y="832.60" width="1" height="14.38" fill="#e8145a" opacity="0.75"/>
<rect x="546.22" y="834.32" width="2.1" height="10.06" fill="#e8145a"/>
<rect x="551.48" y="842.39" width="1" height="3.62" fill="#e8145a" opacity="0.75"/>
<rect x="550.93" y="842.82" width="2.1" height="2.53" fill="#e8145a"/>
<rect x="565.33" y="845.26" width="1" height="7.45" fill="#e8145a" opacity="0.75"/>
<rect x="564.78" y="846.16" width="2.1" height="5.22" fill="#e8145a"/>
<rect x="570.33" y="847.71" width="1" height="12.14" fill="#e8145a" opacity="0.75"/>
<rect x="569.78" y="849.17" width="2.1" height="8.50" fill="#e8145a"/>
<rect x="574.91" y="855.59" width="1" height="4.58" fill="#e8145a" opacity="0.75"/>
<rect x="574.36" y="856.14" width="2.1" height="3.21" fill="#e8145a"/>
<rect x="579.60" y="857.51" width="1" height="4.79" fill="#00f06c" opacity="0.75"/>
<rect x="579.05" y="858.08" width="2.1" height="3.35" fill="#00f06c"/>
<rect x="598.34" y="855.59" width="1" height="4.26" fill="#00f06c" opacity="0.75"/>
<rect x="597.79" y="856.10" width="2.1" height="2.98" fill="#00f06c"/>
<rect x="602.81" y="858.04" width="1" height="7.77" fill="#e8145a" opacity="0.75"/>
<rect x="602.26" y="858.97" width="2.1" height="5.44" fill="#e8145a"/>
<rect x="607.29" y="856.98" width="1" height="6.92" fill="#00f06c" opacity="0.75"/>
<rect x="606.74" y="857.81" width="2.1" height="4.85" fill="#00f06c"/>
<rect x="612.18" y="853.46" width="1" height="7.03" fill="#00f06c" opacity="0.75"/>
<rect x="611.63" y="854.30" width="2.1" height="4.92" fill="#00f06c"/>
<rect x="616.87" y="848.78" width="1" height="9.27" fill="#00f06c" opacity="0.75"/>
<rect x="616.32" y="849.89" width="2.1" height="6.49" fill="#00f06c"/>
<rect x="630.72" y="849.84" width="1" height="7.14" fill="#e8145a" opacity="0.75"/>
<rect x="630.17" y="850.70" width="2.1" height="4.99" fill="#e8145a"/>
<rect x="635.29" y="850.91" width="1" height="5.01" fill="#00f06c" opacity="0.75"/>
<rect x="634.74" y="851.51" width="2.1" height="3.50" fill="#00f06c"/>
<rect x="640.30" y="850.05" width="1" height="10.86" fill="#e8145a" opacity="0.75"/>
<rect x="639.75" y="851.36" width="2.1" height="7.60" fill="#e8145a"/>
<rect x="644.88" y="856.98" width="1" height="9.90" fill="#e8145a" opacity="0.75"/>
<rect x="644.33" y="858.16" width="2.1" height="6.93" fill="#e8145a"/>
<rect x="649.46" y="854.10" width="1" height="10.33" fill="#00f06c" opacity="0.75"/>
<rect x="648.91" y="855.34" width="2.1" height="7.23" fill="#00f06c"/>
<rect x="663.73" y="851.65" width="1" height="6.71" fill="#e8145a" opacity="0.75"/>
<rect x="663.18" y="852.46" width="2.1" height="4.70" fill="#e8145a"/>
<rect x="668.31" y="851.65" width="1" height="6.39" fill="#00f06c" opacity="0.75"/>
<rect x="667.76" y="852.42" width="2.1" height="4.47" fill="#00f06c"/>
<rect x="672.89" y="847.71" width="1" height="9.27" fill="#e8145a" opacity="0.75"/>
<rect x="672.34" y="848.82" width="2.1" height="6.49" fill="#e8145a"/>
<rect x="677.57" y="849.84" width="1" height="7.14" fill="#00f06c" opacity="0.75"/>
<rect x="677.02" y="850.70" width="2.1" height="4.99" fill="#00f06c"/>
<rect x="682.15" y="849.20" width="1" height="4.58" fill="#00f06c" opacity="0.75"/>
<rect x="681.60" y="849.75" width="2.1" height="3.21" fill="#00f06c"/>
<rect x="696.00" y="839.94" width="1" height="15.23" fill="#00f06c" opacity="0.75"/>
<rect x="695.45" y="841.76" width="2.1" height="10.66" fill="#00f06c"/>
<rect x="701.00" y="839.19" width="1" height="7.14" fill="#e8145a" opacity="0.75"/>
<rect x="700.45" y="840.05" width="2.1" height="4.99" fill="#e8145a"/>
<rect x="705.90" y="840.68" width="1" height="6.71" fill="#00f06c" opacity="0.75"/>
<rect x="705.35" y="841.49" width="2.1" height="4.70" fill="#00f06c"/>
<rect x="709.97" y="843.27" width="1" height="10.33" fill="#e8145a" opacity="0.75"/>
<rect x="709.42" y="844.51" width="2.1" height="7.23" fill="#e8145a"/>
<rect x="714.87" y="850.94" width="1" height="10.44" fill="#e8145a" opacity="0.75"/>
<rect x="714.32" y="852.19" width="2.1" height="7.31" fill="#e8145a"/>
<rect x="728.93" y="858.39" width="1" height="3.41" fill="#e8145a" opacity="0.75"/>
<rect x="728.38" y="858.80" width="2.1" height="2.39" fill="#e8145a"/>
<rect x="733.40" y="859.67" width="1" height="5.32" fill="#e8145a" opacity="0.75"/>
<rect x="732.85" y="860.31" width="2.1" height="3.73" fill="#e8145a"/>
<rect x="738.30" y="860.31" width="1" height="3.41" fill="#00f06c" opacity="0.75"/>
<rect x="737.75" y="860.72" width="2.1" height="2.39" fill="#00f06c"/>
<rect x="742.77" y="852.22" width="1" height="10.44" fill="#00f06c" opacity="0.75"/>
<rect x="742.22" y="853.47" width="2.1" height="7.31" fill="#00f06c"/>
<rect x="747.57" y="854.13" width="1" height="3.19" fill="#00f06c" opacity="0.75"/>
<rect x="747.02" y="854.52" width="2.1" height="2.24" fill="#00f06c"/>
<rect x="757.04" y="866.38" width="1" height="2.13" fill="#e8145a" opacity="0.75"/>
<rect x="756.49" y="866.63" width="2.1" height="1.50" fill="#e8145a"/>
<rect x="761.41" y="865.10" width="1" height="3.41" fill="#00f06c" opacity="0.75"/>
<rect x="760.86" y="865.51" width="2.1" height="2.39" fill="#00f06c"/>
<rect x="765.99" y="852.22" width="1" height="8.52" fill="#e8145a" opacity="0.75"/>
<rect x="765.44" y="853.24" width="2.1" height="5.96" fill="#e8145a"/>
<rect x="770.68" y="854.13" width="1" height="4.26" fill="#00f06c" opacity="0.75"/>
<rect x="770.13" y="854.64" width="2.1" height="2.98" fill="#00f06c"/>
<rect x="775.26" y="851.15" width="1" height="10.97" fill="#00f06c" opacity="0.75"/>
<rect x="774.71" y="852.47" width="2.1" height="7.68" fill="#00f06c"/>
<rect x="780.05" y="837.63" width="1" height="14.38" fill="#00f06c" opacity="0.75"/>
<rect x="779.50" y="839.35" width="2.1" height="10.06" fill="#00f06c"/>
<rect x="793.89" y="822.18" width="1" height="15.76" fill="#00f06c" opacity="0.75"/>
<rect x="793.34" y="824.07" width="2.1" height="11.03" fill="#00f06c"/>
<rect x="799.00" y="821.12" width="1" height="6.92" fill="#e8145a" opacity="0.75"/>
<rect x="798.45" y="821.95" width="2.1" height="4.85" fill="#e8145a"/>
<rect x="803.48" y="809.94" width="1" height="14.38" fill="#00f06c" opacity="0.75"/>
<rect x="802.93" y="811.66" width="2.1" height="10.06" fill="#00f06c"/>
<rect x="808.27" y="813.66" width="1" height="8.52" fill="#00f06c" opacity="0.75"/>
<rect x="807.72" y="814.69" width="2.1" height="5.96" fill="#00f06c"/>
<rect x="813.06" y="807.06" width="1" height="13.84" fill="#00f06c" opacity="0.75"/>
<rect x="812.51" y="808.72" width="2.1" height="9.69" fill="#00f06c"/>
<rect x="826.69" y="815.26" width="1" height="9.58" fill="#e8145a" opacity="0.75"/>
<rect x="826.14" y="816.41" width="2.1" height="6.71" fill="#e8145a"/>
<rect x="831.70" y="821.65" width="1" height="6.92" fill="#e8145a" opacity="0.75"/>
<rect x="831.15" y="822.48" width="2.1" height="4.85" fill="#e8145a"/>
<rect x="836.28" y="814.73" width="1" height="9.05" fill="#00f06c" opacity="0.75"/>
<rect x="835.73" y="815.81" width="2.1" height="6.34" fill="#00f06c"/>
<rect x="840.75" y="811.00" width="1" height="8.20" fill="#00f06c" opacity="0.75"/>
<rect x="840.20" y="811.99" width="2.1" height="5.74" fill="#00f06c"/>
<rect x="845.86" y="799.61" width="1" height="15.97" fill="#e8145a" opacity="0.75"/>
<rect x="845.31" y="801.52" width="2.1" height="11.18" fill="#e8145a"/>
<rect x="859.39" y="811.00" width="1" height="7.77" fill="#e8145a" opacity="0.75"/>
<rect x="858.84" y="811.93" width="2.1" height="5.44" fill="#e8145a"/>
<rect x="864.18" y="802.48" width="1" height="12.25" fill="#00f06c" opacity="0.75"/>
<rect x="863.63" y="803.95" width="2.1" height="8.57" fill="#00f06c"/>
<rect x="868.89" y="796.46" width="1" height="15.97" fill="#e8145a" opacity="0.75"/>
<rect x="868.34" y="798.38" width="2.1" height="11.18" fill="#e8145a"/>
<rect x="873.36" y="772.72" width="1" height="27.16" fill="#00f06c" opacity="0.75"/>
<rect x="872.81" y="775.97" width="2.1" height="19.01" fill="#00f06c"/>
<rect x="878.26" y="760.26" width="1" height="20.66" fill="#00f06c" opacity="0.75"/>
<rect x="877.71" y="762.73" width="2.1" height="14.46" fill="#00f06c"/>
<rect x="892.11" y="751.95" width="1" height="16.51" fill="#00f06c" opacity="0.75"/>
<rect x="891.56" y="753.93" width="2.1" height="11.55" fill="#00f06c"/>
<rect x="896.79" y="738.96" width="1" height="19.91" fill="#e8145a" opacity="0.75"/>
<rect x="896.24" y="741.35" width="2.1" height="13.94" fill="#e8145a"/>
<rect x="901.37" y="750.03" width="1" height="16.83" fill="#e8145a" opacity="0.75"/>
<rect x="900.82" y="752.05" width="2.1" height="11.78" fill="#e8145a"/>
<rect x="906.16" y="759.94" width="1" height="9.90" fill="#e8145a" opacity="0.75"/>
<rect x="905.61" y="761.12" width="2.1" height="6.93" fill="#e8145a"/>
<rect x="910.96" y="749.82" width="1" height="14.70" fill="#00f06c" opacity="0.75"/>
<rect x="910.41" y="751.58" width="2.1" height="10.29" fill="#00f06c"/>
<rect x="924.80" y="764.94" width="1" height="17.36" fill="#e8145a" opacity="0.75"/>
<rect x="924.25" y="767.02" width="2.1" height="12.15" fill="#e8145a"/>
<rect x="929.38" y="753.01" width="1" height="27.48" fill="#00f06c" opacity="0.75"/>
<rect x="928.83" y="756.31" width="2.1" height="19.23" fill="#00f06c"/>
<rect x="934.38" y="739.38" width="1" height="20.02" fill="#e8145a" opacity="0.75"/>
<rect x="933.83" y="741.78" width="2.1" height="14.01" fill="#e8145a"/>
<rect x="938.96" y="759.19" width="1" height="10.86" fill="#00f06c" opacity="0.75"/>
<rect x="938.41" y="760.49" width="2.1" height="7.60" fill="#00f06c"/>
<rect x="943.44" y="751.10" width="1" height="27.69" fill="#e8145a" opacity="0.75"/>
<rect x="942.89" y="754.42" width="2.1" height="19.38" fill="#e8145a"/>
<rect x="957.81" y="763.13" width="1" height="12.03" fill="#e8145a" opacity="0.75"/>
<rect x="957.26" y="764.58" width="2.1" height="8.42" fill="#e8145a"/>
<rect x="962.39" y="768.99" width="1" height="10.86" fill="#00f06c" opacity="0.75"/>
<rect x="961.84" y="770.29" width="2.1" height="7.60" fill="#00f06c"/>
<rect x="967.08" y="754.08" width="1" height="22.15" fill="#00f06c" opacity="0.75"/>
<rect x="966.53" y="756.74" width="2.1" height="15.51" fill="#00f06c"/>
<rect x="971.66" y="747.90" width="1" height="20.02" fill="#e8145a" opacity="0.75"/>
<rect x="971.11" y="750.30" width="2.1" height="14.01" fill="#e8145a"/>
<rect x="976.24" y="755.68" width="1" height="10.97" fill="#00f06c" opacity="0.75"/>
<rect x="975.69" y="756.99" width="2.1" height="7.68" fill="#00f06c"/>
<rect x="990.08" y="753.87" width="1" height="9.27" fill="#e8145a" opacity="0.75"/>
<rect x="989.53" y="754.98" width="2.1" height="6.49" fill="#e8145a"/>
<rect x="994.77" y="754.93" width="1" height="13.21" fill="#e8145a" opacity="0.75"/>
<rect x="994.22" y="756.52" width="2.1" height="9.24" fill="#e8145a"/>
<rect x="999.67" y="748.54" width="1" height="20.66" fill="#00f06c" opacity="0.75"/>
<rect x="999.12" y="751.02" width="2.1" height="14.46" fill="#00f06c"/>
<rect x="1004.35" y="731.93" width="1" height="26.20" fill="#e8145a" opacity="0.75"/>
<rect x="1003.80" y="735.07" width="2.1" height="18.34" fill="#e8145a"/>
<rect x="1008.93" y="728.73" width="1" height="25.13" fill="#e8145a" opacity="0.75"/>
<rect x="1008.38" y="731.75" width="2.1" height="17.59" fill="#e8145a"/>
<rect x="1021.71" y="747.16" width="1" height="1.81" fill="#e8145a" opacity="0.75"/>
<rect x="1021.16" y="747.37" width="2.1" height="1.50" fill="#e8145a"/>
<rect x="1027.63" y="746.16" width="1" height="12.61" fill="#e8145a" opacity="0.75"/>
<rect x="1027.08" y="747.68" width="2.1" height="8.83" fill="#e8145a"/>
<rect x="1032.11" y="747.15" width="1" height="9.81" fill="#00f06c" opacity="0.75"/>
<rect x="1031.56" y="748.32" width="2.1" height="6.87" fill="#00f06c"/>
<rect x="1036.73" y="744.06" width="1" height="16.81" fill="#e8145a" opacity="0.75"/>
<rect x="1036.18" y="746.08" width="2.1" height="11.77" fill="#e8145a"/>
<rect x="1041.22" y="751.07" width="1" height="8.69" fill="#00f06c" opacity="0.75"/>
<rect x="1040.67" y="752.11" width="2.1" height="6.08" fill="#00f06c"/>
<rect x="1055.65" y="748.27" width="1" height="10.51" fill="#00f06c" opacity="0.75"/>
<rect x="1055.10" y="749.53" width="2.1" height="7.36" fill="#00f06c"/>
<rect x="1060.41" y="744.76" width="1" height="7.99" fill="#00f06c" opacity="0.75"/>
<rect x="1059.86" y="745.72" width="2.1" height="5.59" fill="#00f06c"/>
<rect x="1065.03" y="743.36" width="1" height="19.19" fill="#e8145a" opacity="0.75"/>
<rect x="1064.48" y="745.67" width="2.1" height="13.44" fill="#e8145a"/>
<rect x="1069.66" y="735.38" width="1" height="35.03" fill="#00f06c" opacity="0.75"/>
<rect x="1069.11" y="739.58" width="2.1" height="24.52" fill="#00f06c"/>
<rect x="1074.42" y="732.57" width="1" height="14.99" fill="#00f06c" opacity="0.75"/>
<rect x="1073.87" y="734.37" width="2.1" height="10.49" fill="#00f06c"/>
<rect x="1088.15" y="717.16" width="1" height="25.50" fill="#00f06c" opacity="0.75"/>
<rect x="1087.60" y="720.22" width="2.1" height="17.85" fill="#00f06c"/>
<rect x="1092.63" y="713.94" width="1" height="14.01" fill="#00f06c" opacity="0.75"/>
<rect x="1092.08" y="715.62" width="2.1" height="9.81" fill="#00f06c"/>
<rect x="1097.26" y="686.34" width="1" height="29.42" fill="#00f06c" opacity="0.75"/>
<rect x="1096.71" y="689.87" width="2.1" height="20.60" fill="#00f06c"/>
<rect x="1102.44" y="687.32" width="1" height="14.99" fill="#e8145a" opacity="0.75"/>
<rect x="1101.89" y="689.12" width="2.1" height="10.49" fill="#e8145a"/>
<rect x="1107.07" y="687.74" width="1" height="11.21" fill="#e8145a" opacity="0.75"/>
<rect x="1106.52" y="689.09" width="2.1" height="7.85" fill="#e8145a"/>
<rect x="1120.66" y="680.32" width="1" height="24.52" fill="#00f06c" opacity="0.75"/>
<rect x="1120.11" y="683.26" width="2.1" height="17.16" fill="#00f06c"/>
<rect x="1125.70" y="668.69" width="1" height="43.15" fill="#e8145a" opacity="0.75"/>
<rect x="1125.15" y="673.86" width="2.1" height="30.21" fill="#e8145a"/>
<rect x="1130.18" y="677.09" width="1" height="23.26" fill="#00f06c" opacity="0.75"/>
<rect x="1129.63" y="679.88" width="2.1" height="16.28" fill="#00f06c"/>
<rect x="1135.09" y="674.71" width="1" height="14.99" fill="#00f06c" opacity="0.75"/>
<rect x="1134.54" y="676.51" width="2.1" height="10.49" fill="#00f06c"/>
<rect x="1139.29" y="674.01" width="1" height="18.91" fill="#e8145a" opacity="0.75"/>
<rect x="1138.74" y="676.28" width="2.1" height="13.24" fill="#e8145a"/>
<rect x="1153.30" y="685.50" width="1" height="15.83" fill="#e8145a" opacity="0.75"/>
<rect x="1152.75" y="687.40" width="2.1" height="11.08" fill="#e8145a"/>
<rect x="1158.20" y="689.42" width="1" height="12.33" fill="#00f06c" opacity="0.75"/>
<rect x="1157.65" y="690.90" width="2.1" height="8.63" fill="#00f06c"/>
<rect x="1162.69" y="689.14" width="1" height="9.39" fill="#e8145a" opacity="0.75"/>
<rect x="1162.14" y="690.27" width="2.1" height="6.57" fill="#e8145a"/>
<rect x="1167.73" y="692.50" width="1" height="9.53" fill="#e8145a" opacity="0.75"/>
<rect x="1167.18" y="693.65" width="2.1" height="6.67" fill="#e8145a"/>
<rect x="1172.21" y="672.89" width="1" height="28.86" fill="#00f06c" opacity="0.75"/>
<rect x="1171.66" y="676.35" width="2.1" height="20.20" fill="#00f06c"/>
<rect x="1186.21" y="654.38" width="1" height="22.90" fill="#e8145a" opacity="0.75"/>
<rect x="1185.66" y="657.12" width="2.1" height="16.03" fill="#e8145a"/>
<rect x="1190.69" y="662.36" width="1" height="14.38" fill="#00f06c" opacity="0.75"/>
<rect x="1190.14" y="664.09" width="2.1" height="10.06" fill="#00f06c"/>
<rect x="1195.59" y="660.77" width="1" height="11.18" fill="#e8145a" opacity="0.75"/>
<rect x="1195.04" y="662.11" width="2.1" height="7.83" fill="#e8145a"/>
<rect x="1200.27" y="658.10" width="1" height="23.43" fill="#e8145a" opacity="0.75"/>
<rect x="1199.72" y="660.92" width="2.1" height="16.40" fill="#e8145a"/>
<rect x="1204.85" y="671.95" width="1" height="11.71" fill="#e8145a" opacity="0.75"/>
<rect x="1204.30" y="673.35" width="2.1" height="8.20" fill="#e8145a"/>
<rect x="1214.12" y="671.10" width="1" height="5.64" fill="#00f06c" opacity="0.75"/>
<rect x="1213.57" y="671.77" width="2.1" height="3.95" fill="#00f06c"/>
<rect x="1218.70" y="673.55" width="1" height="8.52" fill="#e8145a" opacity="0.75"/>
<rect x="1218.15" y="674.57" width="2.1" height="5.96" fill="#e8145a"/>
<rect x="1223.28" y="658.96" width="1" height="23.64" fill="#00f06c" opacity="0.75"/>
<rect x="1222.73" y="661.79" width="2.1" height="16.55" fill="#00f06c"/>
<rect x="1228.28" y="653.31" width="1" height="18.10" fill="#00f06c" opacity="0.75"/>
<rect x="1227.73" y="655.48" width="2.1" height="12.67" fill="#00f06c"/>
<rect x="1232.86" y="656.19" width="1" height="36.53" fill="#e8145a" opacity="0.75"/>
<rect x="1232.31" y="660.57" width="2.1" height="25.57" fill="#e8145a"/>
<rect x="1237.55" y="676.21" width="1" height="19.17" fill="#e8145a" opacity="0.75"/>
<rect x="1237.00" y="678.51" width="2.1" height="13.42" fill="#e8145a"/>
<rect x="1251.39" y="685.58" width="1" height="13.84" fill="#e8145a" opacity="0.75"/>
<rect x="1250.84" y="687.24" width="2.1" height="9.69" fill="#e8145a"/>
<rect x="1256.29" y="696.98" width="1" height="12.78" fill="#e8145a" opacity="0.75"/>
<rect x="1255.74" y="698.51" width="2.1" height="8.95" fill="#e8145a"/>
<rect x="1260.76" y="699.11" width="1" height="9.90" fill="#00f06c" opacity="0.75"/>
<rect x="1260.21" y="700.29" width="2.1" height="6.93" fill="#00f06c"/>
<rect x="1265.55" y="679.19" width="1" height="26.84" fill="#00f06c" opacity="0.75"/>
<rect x="1265.00" y="682.41" width="2.1" height="18.79" fill="#00f06c"/>
<rect x="1270.35" y="691.12" width="1" height="17.89" fill="#e8145a" opacity="0.75"/>
<rect x="1269.80" y="693.27" width="2.1" height="12.52" fill="#e8145a"/>
<rect x="1284.19" y="688.78" width="1" height="12.14" fill="#e8145a" opacity="0.75"/>
<rect x="1283.64" y="690.23" width="2.1" height="8.50" fill="#e8145a"/>
<rect x="1288.66" y="692.18" width="1" height="10.65" fill="#00f06c" opacity="0.75"/>
<rect x="1288.11" y="693.46" width="2.1" height="7.45" fill="#00f06c"/>
<rect x="1293.56" y="688.78" width="1" height="22.04" fill="#00f06c" opacity="0.75"/>
<rect x="1293.01" y="691.42" width="2.1" height="15.43" fill="#00f06c"/>
<rect x="1298.25" y="694.31" width="1" height="12.25" fill="#00f06c" opacity="0.75"/>
<rect x="1297.70" y="695.78" width="2.1" height="8.57" fill="#00f06c"/>
<rect x="1302.83" y="684.94" width="1" height="14.91" fill="#00f06c" opacity="0.75"/>
<rect x="1302.28" y="686.73" width="2.1" height="10.44" fill="#00f06c"/>
<rect x="1316.99" y="677.27" width="1" height="22.58" fill="#00f06c" opacity="0.75"/>
<rect x="1316.44" y="679.98" width="2.1" height="15.80" fill="#00f06c"/>
<rect x="1321.46" y="670.88" width="1" height="18.96" fill="#00f06c" opacity="0.75"/>
<rect x="1320.91" y="673.16" width="2.1" height="13.27" fill="#00f06c"/>
<rect x="1326.26" y="671.10" width="1" height="26.94" fill="#e8145a" opacity="0.75"/>
<rect x="1325.71" y="674.33" width="2.1" height="18.86" fill="#e8145a"/>
<rect x="1330.84" y="671.10" width="1" height="27.26" fill="#00f06c" opacity="0.75"/>
<rect x="1330.29" y="674.37" width="2.1" height="19.08" fill="#00f06c"/>
<rect x="1335.76" y="688.87" width="1" height="19.70" fill="#e8145a" opacity="0.75"/>
<rect x="1335.21" y="691.24" width="2.1" height="13.79" fill="#e8145a"/>
<rect x="1349.60" y="698.46" width="1" height="27.37" fill="#e8145a" opacity="0.75"/>
<rect x="1349.05" y="701.74" width="2.1" height="19.16" fill="#e8145a"/>
<rect x="1354.08" y="708.36" width="1" height="21.51" fill="#00f06c" opacity="0.75"/>
<rect x="1353.53" y="710.94" width="2.1" height="15.06" fill="#00f06c"/>
<rect x="1358.98" y="694.94" width="1" height="23.43" fill="#00f06c" opacity="0.75"/>
<rect x="1358.43" y="697.75" width="2.1" height="16.40" fill="#00f06c"/>
<rect x="1363.45" y="683.87" width="1" height="18.32" fill="#00f06c" opacity="0.75"/>
<rect x="1362.90" y="686.06" width="2.1" height="12.82" fill="#00f06c"/>
<rect x="1368.24" y="686.74" width="1" height="15.97" fill="#00f06c" opacity="0.75"/>
<rect x="1367.69" y="688.66" width="2.1" height="11.18" fill="#00f06c"/>
<rect x="1382.09" y="688.87" width="1" height="19.70" fill="#e8145a" opacity="0.75"/>
<rect x="1381.54" y="691.24" width="2.1" height="13.79" fill="#e8145a"/>
<rect x="1386.88" y="692.07" width="1" height="17.78" fill="#00f06c" opacity="0.75"/>
<rect x="1386.33" y="694.20" width="2.1" height="12.45" fill="#00f06c"/>
<rect x="1391.67" y="689.94" width="1" height="9.90" fill="#00f06c" opacity="0.75"/>
<rect x="1391.12" y="691.12" width="2.1" height="6.93" fill="#00f06c"/>
<rect x="1396.25" y="686.74" width="1" height="20.23" fill="#e8145a" opacity="0.75"/>
<rect x="1395.70" y="689.17" width="2.1" height="14.16" fill="#e8145a"/>
<rect x="1400.94" y="697.39" width="1" height="22.90" fill="#e8145a" opacity="0.75"/>
<rect x="1400.39" y="700.14" width="2.1" height="16.03" fill="#e8145a"/>
<rect x="1414.78" y="702.40" width="1" height="11.29" fill="#00f06c" opacity="0.75"/>
<rect x="1414.23" y="703.75" width="2.1" height="7.90" fill="#00f06c"/>
<rect x="1419.36" y="701.33" width="1" height="16.61" fill="#e8145a" opacity="0.75"/>
<rect x="1418.81" y="703.32" width="2.1" height="11.63" fill="#e8145a"/>
<rect x="1424.15" y="706.98" width="1" height="11.18" fill="#00f06c" opacity="0.75"/>
<rect x="1423.60" y="708.32" width="2.1" height="7.83" fill="#00f06c"/>
<rect x="1428.62" y="702.72" width="1" height="10.97" fill="#00f06c" opacity="0.75"/>
<rect x="1428.07" y="704.03" width="2.1" height="7.68" fill="#00f06c"/>
<rect x="1433.52" y="705.17" width="1" height="7.67" fill="#e8145a" opacity="0.75"/>
<rect x="1432.97" y="706.09" width="2.1" height="5.37" fill="#e8145a"/>
<rect x="1447.37" y="704.53" width="1" height="10.44" fill="#e8145a" opacity="0.75"/>
<rect x="1446.82" y="705.78" width="2.1" height="7.31" fill="#e8145a"/>
<rect x="1452.37" y="709.85" width="1" height="5.96" fill="#00f06c" opacity="0.75"/>
<rect x="1451.82" y="710.57" width="2.1" height="4.17" fill="#00f06c"/>
<rect x="1456.95" y="704.10" width="1" height="6.60" fill="#00f06c" opacity="0.75"/>
<rect x="1456.40" y="704.89" width="2.1" height="4.62" fill="#00f06c"/>
<rect x="1461.43" y="698.14" width="1" height="12.78" fill="#00f06c" opacity="0.75"/>
<rect x="1460.88" y="699.67" width="2.1" height="8.95" fill="#00f06c"/>
<rect x="1465.90" y="688.34" width="1" height="11.71" fill="#e8145a" opacity="0.75"/>
<rect x="1465.35" y="689.74" width="2.1" height="8.20" fill="#e8145a"/>
</g>
<rect x="91" y="663.8" width="69" height="23.6" fill="#232325" fill-opacity="0.4" stroke="#4a4a4d" stroke-width="1"/>
<rect x="97.4" y="670.2" width="11.1" height="10.5" fill="#444444"/>
<text x="110.7" y="680.0" font-size="14" fill="#dcdcdc" textLength="45.0" lengthAdjust="spacingAndGlyphs">GOOGL</text>
<path d="M1484.8 1 H1499.8 V912.5 A14.5 14.5 0 0 1 1485.3 926.5 H1484.8 Z" fill="#303135"/>
<rect x="1487.7" y="3" width="9.8" height="893.6" rx="4.9" fill="#4c505a"/>
</svg>
</body></html>
